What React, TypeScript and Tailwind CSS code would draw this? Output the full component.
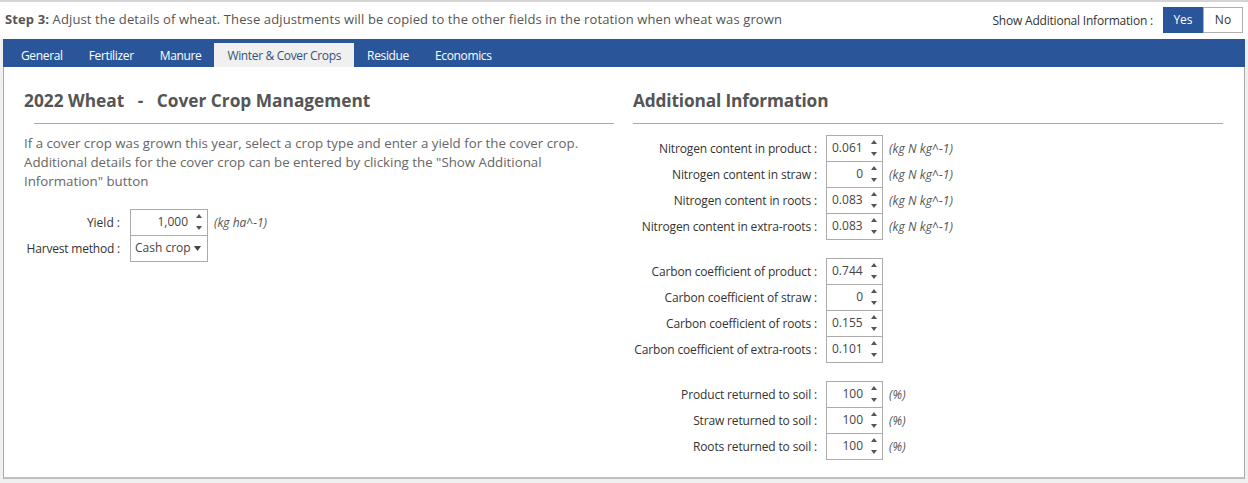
import React from 'react'

const tabs = ['General', 'Fertilizer', 'Manure', 'Winter & Cover Crops', 'Residue', 'Economics']

const Spinner = (): React.ReactElement => (
    <span className="flex flex-col items-center justify-center gap-[8px] w-[10px]">
        <svg width="6" height="4" viewBox="0 0 6 4">
            <path d="M3 0 L6 4 L0 4 Z" fill="#555" />
        </svg>
        <svg width="6" height="4" viewBox="0 0 6 4">
            <path d="M0 0 L6 0 L3 4 Z" fill="#555" />
        </svg>
    </span>
)

const NumberBox = ({ value, width, align }: { value: string; width: string; align?: string }): React.ReactElement => (
    <div className={`flex items-center h-[27px] border border-[#ababab] bg-white pl-[5px] pr-[3px] -mt-px ${width}`}>
        <span className={`flex-1 text-[12px] text-[#444] ${align ?? 'text-right'} pr-[6px]`}>{value}</span>
        <Spinner />
    </div>
)

type Row = { label: string; value: string; unit: string; align?: string }

const nitrogen: Row[] = [
    { label: 'Nitrogen content in product :', value: '0.061', unit: '(kg N kg^-1)', align: 'text-left' },
    { label: 'Nitrogen content in straw :', value: '0', unit: '(kg N kg^-1)' },
    { label: 'Nitrogen content in roots :', value: '0.083', unit: '(kg N kg^-1)', align: 'text-left' },
    { label: 'Nitrogen content in extra-roots :', value: '0.083', unit: '(kg N kg^-1)', align: 'text-left' },
]

const carbon: Row[] = [
    { label: 'Carbon coefficient of product :', value: '0.744', unit: '', align: 'text-left' },
    { label: 'Carbon coefficient of straw :', value: '0', unit: '' },
    { label: 'Carbon coefficient of roots :', value: '0.155', unit: '', align: 'text-left' },
    { label: 'Carbon coefficient of extra-roots :', value: '0.101', unit: '', align: 'text-left' },
]

const returned: Row[] = [
    { label: 'Product returned to soil :', value: '100', unit: '(%)' },
    { label: 'Straw returned to soil :', value: '100', unit: '(%)' },
    { label: 'Roots returned to soil :', value: '100', unit: '(%)' },
]

const RowGroup = ({ rows }: { rows: Row[] }): React.ReactElement => (
    <div className="flex flex-col pt-px">
        {rows.map((r) => (
            <div key={r.label} className="flex items-center">
                <span className="w-[184px] text-right text-[12px] text-[#333] whitespace-nowrap tracking-[-0.15px]">{r.label}</span>
                <div className="ml-[9px]">
                    <NumberBox value={r.value} width="w-[57px]" align={r.align} />
                </div>
                {r.unit && <span className="ml-[6px] text-[12px] italic text-[#555] tracking-[0.1px]">{r.unit}</span>}
            </div>
        ))}
    </div>
)

export default function App(): React.ReactElement {
    return (
        <div className="w-[1248px] h-[483px] bg-[#f0f0f0] font-['Open_Sans',sans-serif] overflow-hidden">
            <div className="bg-white border-t-2 border-[#d4d4d4] h-[39px] flex items-center justify-between pl-[5px] pr-[5px]">
                <p className="text-[13px] text-[#555] tracking-[0.12px] pb-[1px]">
                    <span className="font-bold">Step 3:</span> Adjust the details of wheat. These adjustments will be copied to the other fields in the rotation when wheat was grown
                </p>
                <div className="flex items-center">
                    <span className="text-[12px] text-[#333] mr-[10px] tracking-[-0.2px]">Show Additional Information :</span>
                    <div className="flex h-[26px] -mt-[2px]">
                        <button className="w-[40px] bg-[#2a5699] text-white text-[12px]">Yes</button>
                        <button className="w-[40px] bg-white border border-[#b0b0b0] text-[#333] text-[12px]">No</button>
                    </div>
                </div>
            </div>
            <div className="mx-[3px] bg-white">
                <div className="bg-[#2a5699] h-[28px] flex items-end pl-[5px]">
                    {tabs.map((t) =>
                        t === 'Winter & Cover Crops' ? (
                            <div key={t} className="h-[24px] px-[13px] pt-px bg-[#f0f0f0] text-[#34507c] text-[12px] flex items-center tracking-[-0.35px]">
                                {t}
                            </div>
                        ) : (
                            <div key={t} className="h-[24px] px-[13px] pt-px text-white text-[12px] flex items-center tracking-[-0.35px]">
                                {t}
                            </div>
                        )
                    )}
                </div>
                <div className="h-[412px] border-l border-r border-[#ababab] border-b-2 border-b-[#c0c0c0] flex gap-[19px] pl-[20px] pr-[20px]">
                    <div className="w-[590px] pt-[21px]">
                        <h2 className="text-[17.3px] font-bold text-[#555] whitespace-pre tracking-[0px]">2022 Wheat   -   Cover Crop Management</h2>
                        <div className="ml-[10px] mt-[9px] border-t border-[#a8a8a8]" />
                        <p className="mt-[10px] text-[13.3px] leading-[19px] text-[#666] tracking-[0px] w-[565px]">
                            If a cover crop was grown this year, select a crop type and enter a yield for the cover crop. Additional details for the cover crop can be entered by clicking the "Show Additional Information" button
                        </p>
                        <div className="mt-[19px] flex flex-col">
                            <div className="flex items-center">
                                <span className="w-[96px] text-right text-[12px] text-[#333] whitespace-nowrap">Yield :</span>
                                <div className="ml-[10px]">
                                    <NumberBox value="1,000" width="w-[78px]" />
                                </div>
                                <span className="ml-[6px] text-[12px] italic text-[#555]">(kg ha^-1)</span>
                            </div>
                            <div className="flex items-center">
                                <span className="w-[96px] text-right text-[12px] text-[#333] whitespace-nowrap tracking-[-0.2px]">Harvest method :</span>
                                <div className="ml-[10px] -mt-px w-[78px] h-[27px] border border-[#ababab] flex items-center justify-between pl-[4px] pr-[6px]">
                                    <span className="text-[12px] text-[#444]">Cash crop</span>
                                    <svg width="7" height="5" viewBox="0 0 7 5">
                                        <path d="M0 0 L7 0 L3.5 5 Z" fill="#444" />
                                    </svg>
                                </div>
                            </div>
                        </div>
                    </div>
                    <div className="w-[590px] pt-[21px]">
                        <h2 className="text-[17.3px] font-bold text-[#555] tracking-[-0.15px]">Additional Information</h2>
                        <div className="mt-[9px] border-t border-[#a8a8a8]" />
                        <div className="mt-[11px] flex flex-col gap-[18px]">
                            <RowGroup rows={nitrogen} />
                            <RowGroup rows={carbon} />
                            <RowGroup rows={returned} />
                        </div>
                    </div>
                </div>
            </div>
        </div>
    )
}
